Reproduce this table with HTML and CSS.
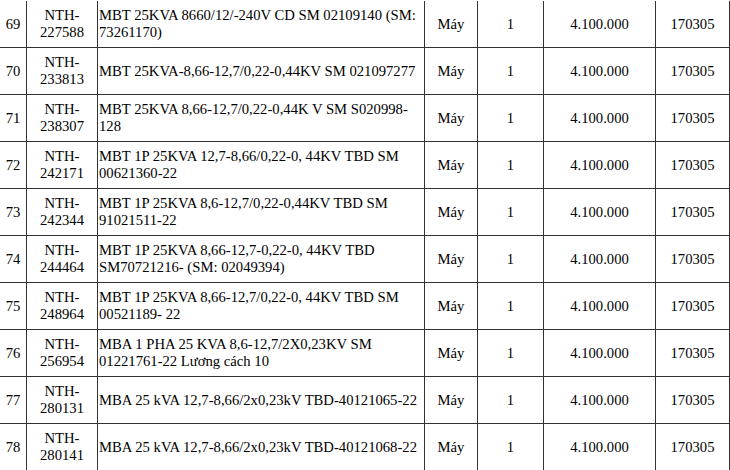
FILE: index.html
```html
<!DOCTYPE html>
<html lang="vi">
<head>
<meta charset="utf-8">
<title>Danh sách máy biến áp</title>
<link rel="stylesheet" href="styles.css">
</head>
<body>
<div class="table" role="table">
  <div class="row" role="row">
    <div class="cell">69</div>
    <div class="cell">NTH-<br>227588</div>
    <div class="cell desc">MBT 25KVA 8660/12/-240V CD SM 02109140 (SM:<br>73261170)</div>
    <div class="cell">Máy</div>
    <div class="cell">1</div>
    <div class="cell">4.100.000</div>
    <div class="cell">170305</div>
  </div>
  <div class="row" role="row">
    <div class="cell">70</div>
    <div class="cell">NTH-<br>233813</div>
    <div class="cell desc">MBT 25KVA-8,66-12,7/0,22-0,44KV SM 021097277</div>
    <div class="cell">Máy</div>
    <div class="cell">1</div>
    <div class="cell">4.100.000</div>
    <div class="cell">170305</div>
  </div>
  <div class="row" role="row">
    <div class="cell">71</div>
    <div class="cell">NTH-<br>238307</div>
    <div class="cell desc">MBT 25KVA 8,66-12,7/0,22-0,44K V SM S020998-<br>128</div>
    <div class="cell">Máy</div>
    <div class="cell">1</div>
    <div class="cell">4.100.000</div>
    <div class="cell">170305</div>
  </div>
  <div class="row" role="row">
    <div class="cell">72</div>
    <div class="cell">NTH-<br>242171</div>
    <div class="cell desc">MBT 1P 25KVA 12,7-8,66/0,22-0, 44KV TBD SM<br>00621360-22</div>
    <div class="cell">Máy</div>
    <div class="cell">1</div>
    <div class="cell">4.100.000</div>
    <div class="cell">170305</div>
  </div>
  <div class="row" role="row">
    <div class="cell">73</div>
    <div class="cell">NTH-<br>242344</div>
    <div class="cell desc">MBT 1P 25KVA 8,6-12,7/0,22-0,44KV TBD SM<br>91021511-22</div>
    <div class="cell">Máy</div>
    <div class="cell">1</div>
    <div class="cell">4.100.000</div>
    <div class="cell">170305</div>
  </div>
  <div class="row" role="row">
    <div class="cell">74</div>
    <div class="cell">NTH-<br>244464</div>
    <div class="cell desc">MBT 1P 25KVA 8,66-12,7-0,22-0, 44KV TBD<br>SM70721216- (SM: 02049394)</div>
    <div class="cell">Máy</div>
    <div class="cell">1</div>
    <div class="cell">4.100.000</div>
    <div class="cell">170305</div>
  </div>
  <div class="row" role="row">
    <div class="cell">75</div>
    <div class="cell">NTH-<br>248964</div>
    <div class="cell desc">MBT 1P 25KVA 8,66-12,7/0,22-0, 44KV TBD SM<br>00521189- 22</div>
    <div class="cell">Máy</div>
    <div class="cell">1</div>
    <div class="cell">4.100.000</div>
    <div class="cell">170305</div>
  </div>
  <div class="row" role="row">
    <div class="cell">76</div>
    <div class="cell">NTH-<br>256954</div>
    <div class="cell desc">MBA 1 PHA 25 KVA 8,6-12,7/2X0,23KV SM<br>01221761-22 Lương cách 10</div>
    <div class="cell">Máy</div>
    <div class="cell">1</div>
    <div class="cell">4.100.000</div>
    <div class="cell">170305</div>
  </div>
  <div class="row" role="row">
    <div class="cell">77</div>
    <div class="cell">NTH-<br>280131</div>
    <div class="cell desc">MBA 25 kVA 12,7-8,66/2x0,23kV TBD-40121065-22</div>
    <div class="cell">Máy</div>
    <div class="cell">1</div>
    <div class="cell">4.100.000</div>
    <div class="cell">170305</div>
  </div>
  <div class="row" role="row">
    <div class="cell">78</div>
    <div class="cell">NTH-<br>280141</div>
    <div class="cell desc">MBA 25 kVA 12,7-8,66/2x0,23kV TBD-40121068-22</div>
    <div class="cell">Máy</div>
    <div class="cell">1</div>
    <div class="cell">4.100.000</div>
    <div class="cell">170305</div>
  </div>
</div>
</body>
</html>
```
FILE: styles.css
```css
html, body {
  margin: 0;
  padding: 0;
  background: #ffffff;
}

body {
  font-family: "Liberation Serif", "Times New Roman", Times, serif;
  font-size: 14.67px;
  line-height: 17px;
  color: #000000;
}

.table {
  display: flex;
  flex-direction: column;
  padding-top: 1px;
  width: 730px;
}

.row {
  display: grid;
  grid-template-columns: 27px 71px 327px 53px 66px 112px 74px;
  height: 47px;
}

.cell {
  box-sizing: border-box;
  border-right: 1px solid #333333;
  border-bottom: 1px solid #333333;
  display: flex;
  align-items: center;
  justify-content: center;
  text-align: center;
  white-space: nowrap;
}

.cell.desc {
  justify-content: flex-start;
  text-align: left;
  padding-left: 1px;
}
```
